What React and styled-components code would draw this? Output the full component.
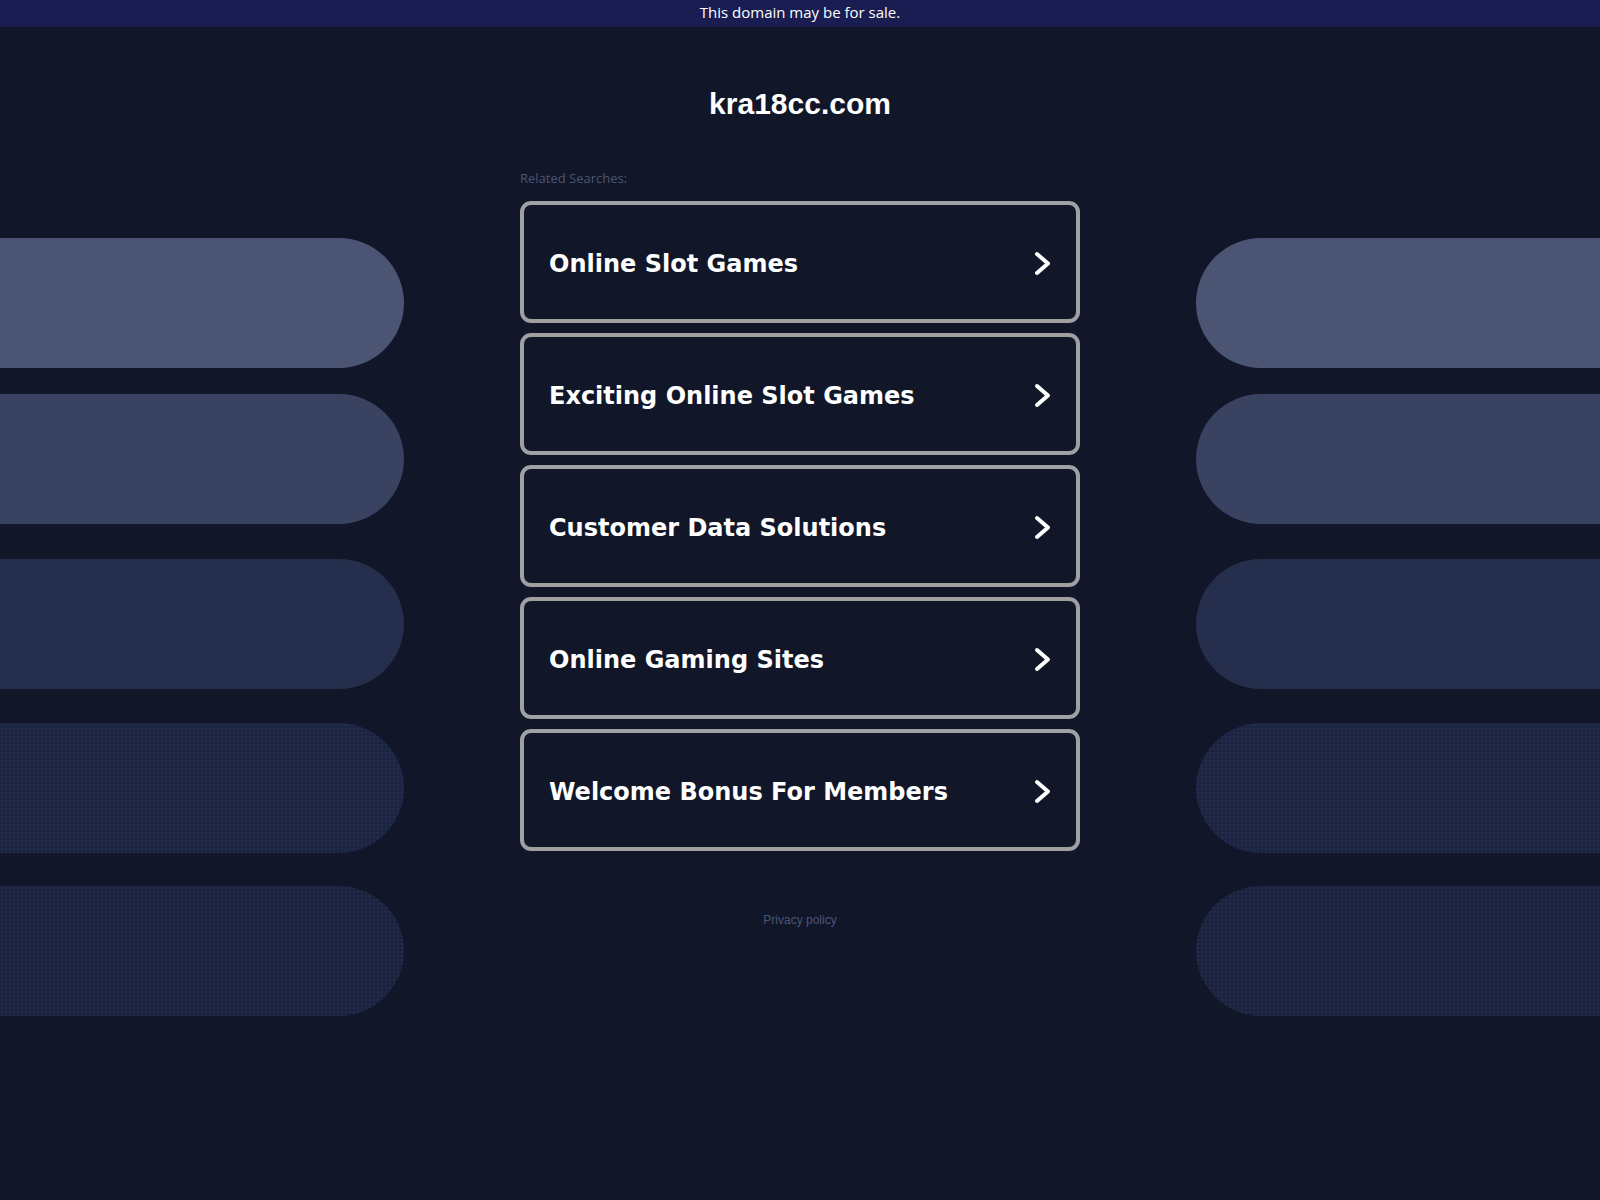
import React from "react";
import styled, { createGlobalStyle } from "styled-components";

const GlobalStyle = createGlobalStyle`
  html, body {
    margin: 0;
    padding: 0;
    background: #111729;
  }
  * { box-sizing: border-box; }
`;

const Banner = styled.div`
  height: 27px;
  background: #191d52;
  color: #ffffff;
  font-family: "Open Sans", "DejaVu Sans", sans-serif;
  font-weight: 500;
  font-size: 15px;
  line-height: 25px;
  text-align: center;
`;

const Layout = styled.div`
  display: grid;
  grid-template-columns: 1fr 560px 1fr;
  min-height: 1173px;
`;

const PillStack = styled.div`
  display: flex;
  flex-direction: column;
  align-items: ${(p) => (p.$side === "left" ? "flex-start" : "flex-end")};
  padding-top: 211px;
`;

const Pill = styled.div`
  width: 404px;
  height: 130px;
  margin-top: ${(p) => p.$gap}px;
  background-color: ${(p) => p.$color};
  border-radius: ${(p) => (p.$side === "left" ? "0 65px 65px 0" : "65px 0 0 65px")};
  ${(p) =>
    p.$dotted
      ? `background-image: radial-gradient(rgba(255,255,255,${p.$dotted}) 0.7px, transparent 0.9px);
         background-size: 4px 4px;`
      : ""}
`;

const Center = styled.main`
  display: flex;
  flex-direction: column;
  padding-top: 60px;
`;

const Title = styled.h1`
  margin: 0;
  font-family: "Liberation Sans", Arial, sans-serif;
  font-weight: 700;
  font-size: 30px;
  line-height: 34px;
  color: #ffffff;
  text-align: center;
`;

const Label = styled.div`
  margin-top: 49px;
  font-family: "Open Sans", "DejaVu Sans", sans-serif;
  font-weight: 500;
  font-size: 13px;
  line-height: 16px;
  color: #4b5573;
`;

const CardList = styled.div`
  margin-top: 15px;
  display: flex;
  flex-direction: column;
  gap: 10px;
`;

const Card = styled.a`
  display: flex;
  align-items: center;
  justify-content: space-between;
  height: 122px;
  padding: 3px 25px 0 25px;
  border: 4px solid #a0a0a2;
  border-radius: 11px;
  background: #111729;
  color: #ffffff;
  text-decoration: none;
  font-family: "DejaVu Sans", Verdana, sans-serif;
  font-weight: 700;
  font-size: 24px;
`;

const Chevron = () => (
  <svg width="17" height="25" viewBox="0 0 17 25" fill="none">
    <path
      d="M3 3 L14 12.5 L3 22"
      stroke="#ffffff"
      strokeWidth="4"
      strokeLinecap="round"
      strokeLinejoin="round"
    />
  </svg>
);

const Footer = styled.div`
  margin-top: 62px;
  text-align: center;
  font-family: "Liberation Sans", Arial, sans-serif;
  font-size: 12px;
  line-height: 14px;
  color: #4b5573;
`;

const pills = [
  { color: "#4b5573", gap: 0 },
  { color: "#394260", gap: 26 },
  { color: "#252f4d", gap: 35 },
  { color: "#1c2444", gap: 34, dotted: 0.04 },
  { color: "#1a2240", gap: 33, dotted: 0.055 },
];

const searches = [
  "Online Slot Games",
  "Exciting Online Slot Games",
  "Customer Data Solutions",
  "Online Gaming Sites",
  "Welcome Bonus For Members",
];

const Side = ({ side }) => (
  <PillStack $side={side}>
    {pills.map((p, i) => (
      <Pill key={i} $side={side} $color={p.color} $gap={p.gap} $dotted={p.dotted} />
    ))}
  </PillStack>
);

export default function App() {
  return (
    <>
      <GlobalStyle />
      <Banner>This domain may be for sale.</Banner>
      <Layout>
        <Side side="left" />
        <Center>
          <Title>kra18cc.com</Title>
          <Label>Related Searches:</Label>
          <CardList>
            {searches.map((s) => (
              <Card key={s} href="#">
                <span>{s}</span>
                <Chevron />
              </Card>
            ))}
          </CardList>
          <Footer>Privacy policy</Footer>
        </Center>
        <Side side="right" />
      </Layout>
    </>
  );
}
